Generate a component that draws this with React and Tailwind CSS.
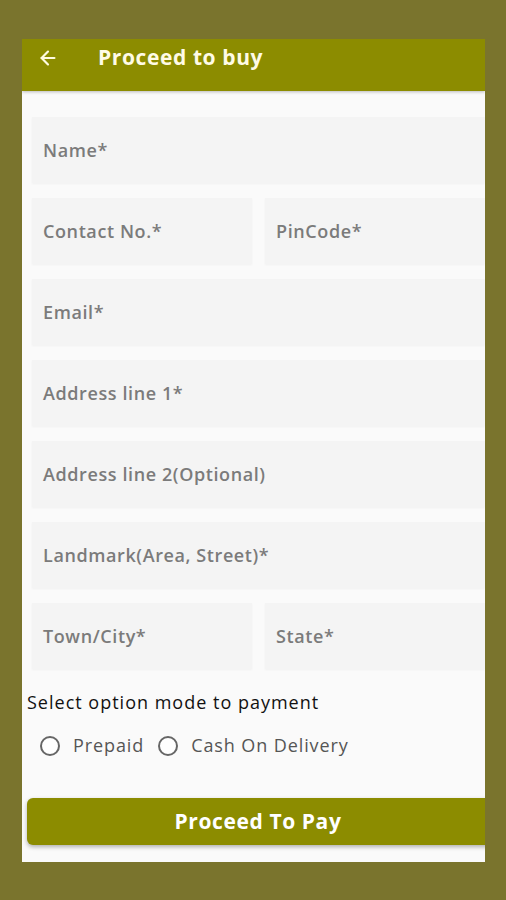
import { ArrowLeft } from 'lucide-react';

const font = { fontFamily: '"Open Sans", "Noto Sans", Arial, sans-serif' };

function Field({ label, className = '' }) {
  return (
    <div className={`h-[66px] bg-[#f4f4f4] flex items-center pl-[11px] shadow-[0_1px_2px_rgba(0,0,0,0.04)] ${className}`}>
      <span className="text-[18px] font-semibold text-[#7b7b7b] tracking-[0.6px]">{label}</span>
    </div>
  );
}

function Radio({ label }) {
  return (
    <div className="flex items-center">
      <span className="w-[20px] h-[20px] rounded-full border-2 border-[#666] bg-white"></span>
      <span className="ml-[13px] text-[18px] text-[#555] tracking-[0.9px]">{label}</span>
    </div>
  );
}

export default function App() {
  return (
    <div className="w-full h-[900px] bg-[#7a742d] pt-[39px] pl-[22px] overflow-hidden" style={font}>
      <div className="w-[463px] h-[823px] bg-[#fafafa] overflow-hidden flex flex-col">
        {/* Header */}
        <div className="h-[52px] bg-[#8c8c00] flex items-start pt-[5px] shrink-0 shadow-[0_1px_3px_rgba(0,0,0,0.25)]">
          <div className="h-[28px] flex items-center">
            <ArrowLeft className="ml-[15px] w-[22px] h-[22px] text-[#fffbe0]" strokeWidth={2.4} />
            <span className="ml-[39px] text-[21px] font-bold text-[#fffbe6] tracking-[0.6px]">Proceed to buy</span>
          </div>
        </div>

        {/* Form */}
        <div className="pl-[10px] pt-[26px] flex flex-col gap-[15px]">
          <Field label="Name*" />
          <div className="flex gap-[13px]">
            <Field label="Contact No.*" className="w-[220px]" />
            <Field label="PinCode*" className="flex-1" />
          </div>
          <Field label="Email*" />
          <Field label="Address line 1*" />
          <Field label="Address line 2(Optional)" />
          <Field label="Landmark(Area, Street)*" />
          <div className="flex gap-[13px]">
            <Field label="Town/City*" className="w-[220px]" />
            <Field label="State*" className="flex-1" />
          </div>
        </div>

        <div className="pl-[5px] mt-[20px] text-[18px] font-medium text-[#111] tracking-[1px]">Select option mode to payment</div>

        <div className="pl-[18px] mt-[16px] flex items-center gap-[14px]">
          <Radio label="Prepaid" />
          <Radio label="Cash On Delivery" />
        </div>

        <div className="pl-[5px] mt-[39px]">
          <button className="w-[470px] h-[47px] bg-[#8c8c00] rounded-l-[6px] shadow-[0_2px_4px_rgba(0,0,0,0.3)] text-white text-[21px] font-bold pr-[8px] tracking-[0.6px]">
            Proceed To Pay
          </button>
        </div>
      </div>
    </div>
  );
}
